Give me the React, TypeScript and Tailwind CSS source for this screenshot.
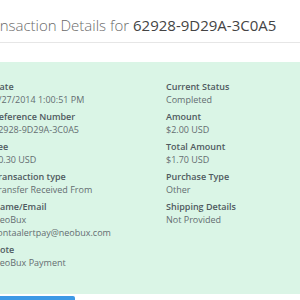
const left: { label: string; values: string[] }[] = [
  { label: 'Date', values: ['6/27/2014 1:00:51 PM'] },
  { label: 'Reference Number', values: ['62928-9D29A-3C0A5'] },
  { label: 'Fee', values: ['$0.30 USD'] },
  { label: 'Transaction type', values: ['Transfer Received From'] },
  { label: 'Name/Email', values: ['NeoBux', 'contaalertpay@neobux.com'] },
  { label: 'Note', values: ['NeoBux Payment'] },
];

const right: { label: string; values: string[] }[] = [
  { label: 'Current Status', values: ['Completed'] },
  { label: 'Amount', values: ['$2.00 USD'] },
  { label: 'Total Amount', values: ['$1.70 USD'] },
  { label: 'Purchase Type', values: ['Other'] },
  { label: 'Shipping Details', values: ['Not Provided'] },
];

function Field({ label, values }: { label: string; values: string[] }) {
  return (
    <div className="mb-[4px]">
      <div className="text-[9px] font-semibold leading-[13px] text-[#4f5a60]">{label}</div>
      {values.map((v) => (
        <div key={v} className="whitespace-nowrap text-[9px] leading-[13px] text-[#646d71]">
          {v}
        </div>
      ))}
    </div>
  );
}

export default function App() {
  return (
    <div className="h-[300px] w-[300px] overflow-hidden bg-white" style={{ fontFamily: '"Open Sans", sans-serif' }}>
      <div className="-ml-[22px] w-[380px] pt-[15px]">
        <h1 className="whitespace-nowrap text-[15px] font-light leading-[20px] text-[#6a6a6a]">
          Transaction Details for <span className="font-normal text-[#444]">62928-9D29A-3C0A5</span>
        </h1>
        <hr className="mt-[7px] border-t border-[#e6e6e6]" />
        <div className="mt-[19px] grid h-[232px] grid-cols-[173px_1fr] bg-[#daf5e6] pl-[15px] pt-[18px]">
          <div className="flex flex-col">
            {left.map((f) => (
              <Field key={f.label} {...f} />
            ))}
          </div>
          <div className="flex flex-col">
            {right.map((f) => (
              <Field key={f.label} {...f} />
            ))}
          </div>
        </div>
        <button className="mt-[2px] h-[30px] w-[97px] rounded-[2px] bg-[#3d99e6]" />
      </div>
    </div>
  );
}
